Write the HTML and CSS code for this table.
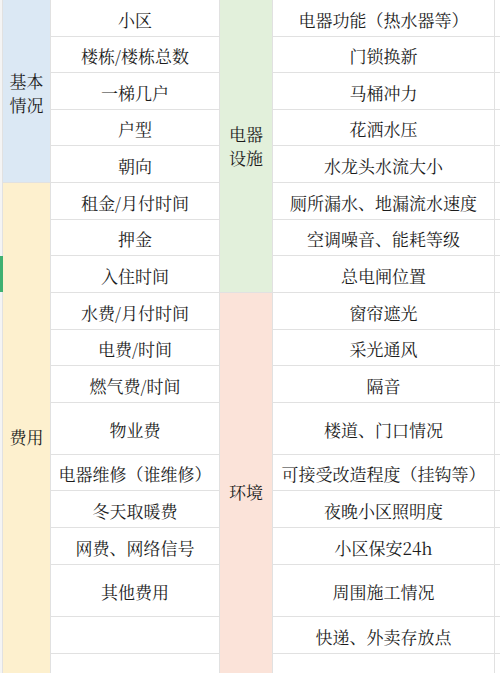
FILE: index.html
```html
<!DOCTYPE html>
<html lang="zh-CN">
<head>
<meta charset="utf-8">
<title>租房检查清单</title>
<link rel="stylesheet" href="styles.css">
</head>
<body>
<div class="sheet">
  <div class="gutter"></div>
  <div class="marker"></div>

  <div class="cat cat-basic"><span>基本<br>情况</span></div>
  <div class="cell">小区</div>
  <div class="cat cat-elec"><span>电器<br>设施</span></div>
  <div class="cell">电器功能（热水器等）</div>
  <div class="tail"></div>

  <div class="cell">楼栋/楼栋总数</div>
  <div class="cell">门锁换新</div>
  <div class="tail"></div>

  <div class="cell">一梯几户</div>
  <div class="cell">马桶冲力</div>
  <div class="tail"></div>

  <div class="cell">户型</div>
  <div class="cell">花洒水压</div>
  <div class="tail"></div>

  <div class="cell">朝向</div>
  <div class="cell">水龙头水流大小</div>
  <div class="tail"></div>

  <div class="cat cat-fee"><span>费用</span></div>
  <div class="cell">租金/月付时间</div>
  <div class="cell">厕所漏水、地漏流水速度</div>
  <div class="tail"></div>

  <div class="cell">押金</div>
  <div class="cell">空调噪音、能耗等级</div>
  <div class="tail"></div>

  <div class="cell">入住时间</div>
  <div class="cell">总电闸位置</div>
  <div class="tail"></div>

  <div class="cell">水费/月付时间</div>
  <div class="cat cat-env"><span>环境</span></div>
  <div class="cell">窗帘遮光</div>
  <div class="tail"></div>

  <div class="cell">电费/时间</div>
  <div class="cell">采光通风</div>
  <div class="tail"></div>

  <div class="cell">燃气费/时间</div>
  <div class="cell">隔音</div>
  <div class="tail"></div>

  <div class="cell">物业费</div>
  <div class="cell">楼道、门口情况</div>
  <div class="tail"></div>

  <div class="cell">电器维修（谁维修）</div>
  <div class="cell">可接受改造程度（挂钩等）</div>
  <div class="tail"></div>

  <div class="cell">冬天取暖费</div>
  <div class="cell">夜晚小区照明度</div>
  <div class="tail"></div>

  <div class="cell">网费、网络信号</div>
  <div class="cell">小区保安24h</div>
  <div class="tail"></div>

  <div class="cell">其他费用</div>
  <div class="cell">周围施工情况</div>
  <div class="tail"></div>

  <div class="cell"></div>
  <div class="cell">快递、外卖存放点</div>
  <div class="tail"></div>

  <div class="cell"></div>
  <div class="cell"></div>
  <div class="tail"></div>
</div>
</body>
</html>
```

FILE: styles.css
```css
html, body {
  margin: 0;
  padding: 0;
  background: #ffffff;
  height: 673px;
  overflow: hidden;
}

.sheet {
  display: grid;
  grid-template-columns: 2px 47px 168px 52px 221px 5px;
  grid-template-rows: 36px 35px 36px 35px 36px 36px 35px 36px 36px 35px 36px 51px 35px 36px 36px 51px 36px 36px;
  gap: 1px;
  background: #e1e1e1;
  width: 500px;
  font-family: "Noto Serif CJK SC", "Liberation Serif", "Noto Sans CJK SC", serif;
  font-size: 17px;
  color: #1c1c1c;
}

.gutter {
  grid-column: 1;
  grid-row: 1 / -1;
  background: #f4f4f4;
}

.marker {
  grid-column: 1;
  grid-row: 8;
  background: #3fb071;
  margin-right: -1px;
}

.cell {
  background: #ffffff;
  display: flex;
  align-items: center;
  justify-content: center;
  white-space: nowrap;
  padding-top: 2px;
  box-sizing: border-box;
}

.tail {
  background: #ffffff;
}

.cat {
  display: flex;
  align-items: center;
  justify-content: center;
  text-align: center;
  line-height: 24px;
}

.cat-basic {
  grid-row: span 5;
  background: #dbe8f4;
  padding-top: 4px;
}

.cat-fee {
  grid-row: span 13;
  background: #fdf0ce;
}

.cat-elec {
  grid-row: span 8;
  background: #e2f0db;
}

.cat-env {
  grid-row: span 10;
  background: #fbe3d9;
}
```
